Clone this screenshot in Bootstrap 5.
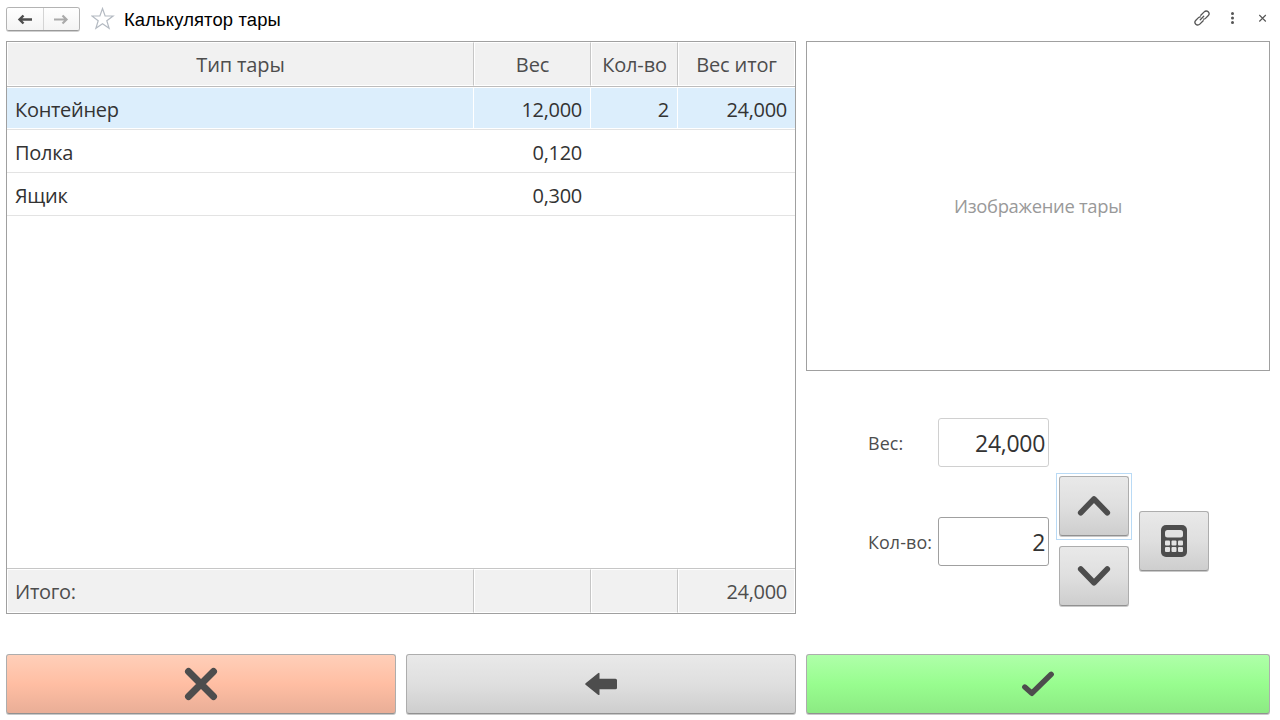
<!DOCTYPE html>
<html lang="ru">
<head>
<meta charset="utf-8">
<meta name="viewport" content="width=device-width, initial-scale=1">
<title>Калькулятор тары</title>
<link href="https://cdn.jsdelivr.net/npm/bootstrap@5.3.0/dist/css/bootstrap.min.css" rel="stylesheet">
<style>
body{font-family:"Open Sans","Noto Sans",sans-serif;color:#333;font-size:20px;letter-spacing:-.3px;line-height:26px;height:720px;overflow:hidden;background:#fff}
.topbar{height:41px;padding:0 6px}
.nav-pair{width:74px;height:24px;margin-top:-4px;border:1px solid #b3b3b3;border-bottom-color:#9a9a9a;border-radius:3px;box-shadow:0 1px 0 #d0d0d0;overflow:hidden}
.nav-pair button{border:0;padding:0;flex:1;background:linear-gradient(#fff,#f4f4f4)}
.nav-pair button+button{border-left:1px solid #d4d4d4}
.title{font:18.4px/22px "Liberation Sans",Arial,sans-serif;letter-spacing:.14px;color:#000;margin:-2px 0 0 9px}
.tool{margin-top:-5px}
.main-area{padding:0 10px 0 6px;gap:10px;height:573px}
.left-pane{width:790px;border:1px solid #a0a0a0}
.right-pane{width:464px}
.grid-row{display:grid;grid-template-columns:467px 117px 87px 117px;height:43px;border-bottom:1px solid #e3e3e3}
.grid-row>div{padding:3px 8px 0;display:flex;align-items:center;justify-content:flex-end;white-space:nowrap}
.grid-row>div:nth-child(2),.grid-row>div:nth-child(3){padding-right:9px}
.grid-row>div:first-child{justify-content:flex-start}
.grid-row.head,.grid-row.foot{height:45px;color:#4d4d4d}
.grid-row.head{letter-spacing:-.15px}
.grid-row.head>div,.grid-row.foot>div{background:#f1f1f1;border:1px solid #fff;border-right-color:#c6c6c6;padding:2px 7px 0}
.grid-row.head>div:last-child,.grid-row.foot>div:last-child{border-right-color:#fff}
.grid-row.head{border-bottom-color:#bcbcbc}
.grid-row.head>div{justify-content:center!important}
.grid-row.foot{border-bottom:0;border-top:1px solid #c6c6c6;margin-top:auto}
.grid-row.active-row>div{background:#dceefc;border:1px solid #fff;border-left:0;padding:3px 8px 0}
.grid-row.active-row>div:last-child{border-right:0;padding-right:8px}
.picture{height:330px;border:1px solid #a0a0a0;color:#999;font-size:18.4px}
.fields{padding:47px 0 0 62px}
.labels{font-size:17.9px;letter-spacing:.1px;color:#4d4d4d;width:70px;white-space:nowrap}
.num{width:111px;height:49px;border:1px solid #d0d0d0;border-radius:3px;padding:0 3px;text-align:right;font-size:23px;letter-spacing:-.3px;color:#333;background:#fff}
.num.edit{border-color:#a0a0a0}
.field{height:49px}
.push{border:1px solid #adadad;border-bottom-color:#919191;border-radius:3px;padding:0;background:linear-gradient(#e9e9e9,#dfdfdf 50%,#cecece);box-shadow:0 1px 0 #c9c9c9;display:flex;align-items:center;justify-content:center;height:60px}
.key{width:70px;height:60px}
.key-frame{border:1px solid #b9daf5;padding:2px 2px 3px;margin:-3px -3px -4px}
.push.no{background:linear-gradient(#ffcfb9,#ffbea3 50%,#e9ae97)}
.push.ok{background:linear-gradient(#afffa9,#98fd8f 50%,#8cea83)}
.actions{padding:40px 10px 0 6px;gap:10px}
svg{display:block}
</style>
</head>
<body>
<header class="topbar d-flex align-items-center">
  <div class="nav-pair d-flex">
    <button aria-label="Назад"><svg width="36" height="22" viewBox="0 0 36 22"><path d="M12.500 11.500h12.500M16.500 7.500l-4 4 4 4" fill="none" stroke="#4d4d4d" stroke-width="2.400"/></svg></button>
    <button aria-label="Вперёд"><svg width="36" height="22" viewBox="0 0 36 22"><path d="M10 11.500h12.500M18.500 7.500l4 4-4 4" fill="none" stroke="#aaa" stroke-width="2.200"/></svg></button>
  </div>
  <svg class="tool" style="margin-left:11px" width="24" height="23" viewBox="0 0 24 23"><path d="M11.500 1.500l2.600 7.400 8 .1-6.300 4.700 2.300 7.500-6.600-4.500-6.600 4.500 2.300-7.500L.900 9l8-.1z" fill="#fff" stroke="#b4bac2" stroke-width="1.200"/></svg>
  <h1 class="title">Калькулятор тары</h1>
  <div class="ms-auto d-flex align-items-center tool">
    <svg width="18" height="18" viewBox="0 0 18 18" fill="none" stroke="#555" stroke-width="1.300" stroke-linecap="round"><path d="M7.800 6.300L11.200 2.900c1.200-1.200 2.900-1.200 4-.1s1.100 2.800-.1 4L12.500 9.400c-.6.600-1.200.8-1.900.8M10.200 11.700L6.800 15.100c-1.200 1.200-2.900 1.200-4 .1s-1.100-2.800.1-4L5.500 8.600c.6-.6 1.200-.8 1.900-.8M7.300 10.700l3.400-3.400"/></svg>
    <svg class="ms-3" width="10" height="18" viewBox="0 0 10 18" fill="#555"><circle cx="5.500" cy="4.600" r="1.500"/><circle cx="5.500" cy="9" r="1.500"/><circle cx="5.500" cy="13.400" r="1.500"/></svg>
    <svg style="margin-left:20px;margin-right:7px" width="10" height="18" viewBox="0 0 10 18"><path d="M2.300 6l6.500 6.500M8.800 6l-6.500 6.500" stroke="#555" stroke-width="1.100"/></svg>
  </div>
</header>

<main class="main-area d-flex">
  <section class="left-pane d-flex flex-column">
    <div class="grid-row head"><div>Тип тары</div><div>Вес</div><div>Кол-во</div><div>Вес итог</div></div>
    <div class="grid-row active-row"><div>Контейнер</div><div>12,000</div><div>2</div><div>24,000</div></div>
    <div class="grid-row"><div>Полка</div><div>0,120</div><div></div><div></div></div>
    <div class="grid-row"><div>Ящик</div><div>0,300</div><div></div><div></div></div>
    <div class="grid-row foot"><div>Итого:</div><div></div><div></div><div>24,000</div></div>
  </section>
  <section class="right-pane">
    <div class="picture d-flex align-items-center justify-content-center">Изображение тары</div>
    <div class="fields d-flex">
      <div>
        <div class="field d-flex align-items-center"><label class="labels" for="w">Вес:</label><input id="w" class="num" value="24,000" readonly></div>
        <div class="field d-flex align-items-center" style="margin-top:50px"><label class="labels" for="q">Кол-во:</label><input id="q" class="num edit" value="2"></div>
      </div>
      <div class="d-flex flex-column" style="margin:58px 0 0 10px;gap:10px">
        <div class="key-frame"><button class="push key" aria-label="Больше"><svg width="34" height="24" viewBox="0 0 34 24"><path d="M3.700 18.700L17 5l13.300 13.700" fill="none" stroke="#4d4d4d" stroke-width="5.600" stroke-linecap="round" stroke-linejoin="round"/></svg></button></div>
        <button class="push key" aria-label="Меньше"><svg width="34" height="24" viewBox="0 0 34 24"><path d="M3.700 5L17 18.700 30.300 5" fill="none" stroke="#4d4d4d" stroke-width="5.600" stroke-linecap="round" stroke-linejoin="round"/></svg></button>
      </div>
      <button class="push key" style="margin:93px 0 0 10px" aria-label="Калькулятор"><svg width="26" height="32" viewBox="0 0 26 32"><rect width="26" height="32" rx="5" fill="#4d4d4d"/><g fill="#e2e2e2"><rect x="4" y="5" width="18" height="7.500" rx="2.500"/><rect x="4" y="15.500" width="5" height="5" rx="1"/><rect x="10.500" y="15.500" width="5" height="5" rx="1"/><rect x="17" y="15.500" width="5" height="5" rx="1"/><rect x="4" y="22" width="5" height="5" rx="1"/><rect x="10.500" y="22" width="5" height="5" rx="1"/><rect x="17" y="22" width="5" height="5" rx="1"/></g></svg></button>
    </div>
  </section>
</main>

<footer class="actions d-flex">
  <button class="push no" style="width:390px" aria-label="Отмена"><svg width="34" height="34" viewBox="0 0 34 34"><path d="M4.500 4.500l25 25M29.500 4.500l-25 25" stroke="#4d4d4d" stroke-width="7" stroke-linecap="round"/></svg></button>
  <button class="push" style="width:390px" aria-label="Назад"><svg width="32" height="24" viewBox="0 0 32 24"><path d="M.600 11.200L13 1.200q1.500-1 1.500.5v5H30.500q1.500 0 1.500 1.500v7.500q0 1.500-1.500 1.500h-16v5q0 1.500-1.500.5L.600 12.800q-.8-.8 0-1.600z" fill="#4d4d4d"/></svg></button>
  <button class="push ok" style="width:464px" aria-label="Готово"><svg width="34" height="28" viewBox="0 0 34 28"><path d="M3.800 17l7 6.300L30.200 4.300" fill="none" stroke="#4d4d4d" stroke-width="5.400" stroke-linecap="round" stroke-linejoin="round"/></svg></button>
</footer>
<script src="https://cdn.jsdelivr.net/npm/bootstrap@5.3.0/dist/js/bootstrap.bundle.min.js"></script>
</body>
</html>
